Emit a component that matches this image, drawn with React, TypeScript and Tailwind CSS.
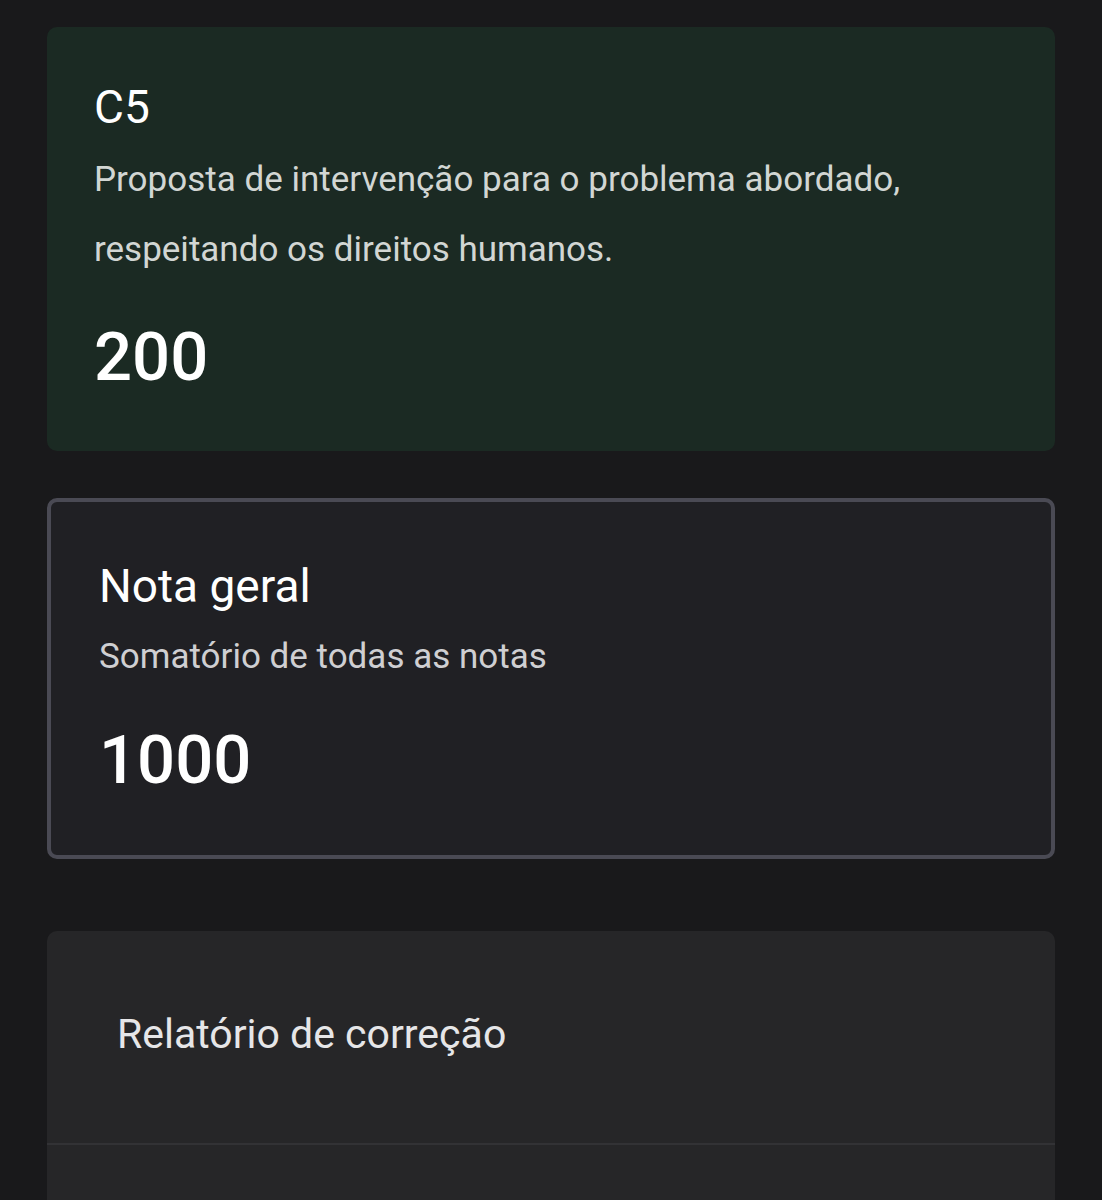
export default function App() {
  return (
    <div className="min-h-[1200px] w-full bg-[#19191b] px-[47px] pt-[27px] pb-10" style={{ fontFamily: "Roboto, 'Noto Sans', sans-serif" }}>
      <div className="rounded-[10px] bg-[#1b2a23] pl-[47px] pr-[46px] pt-[57px] pb-[60px]">
        <div className="text-[46px] leading-[46px] text-white">C5</div>
        <div className="mt-[15px] text-[35px] leading-[70px] text-[#d2d6d3]">
          Proposta de intervenção para o problema abordado,
          <br />
          respeitando os direitos humanos.
        </div>
        <div className="mt-[39px] text-[67px] leading-[67px] font-medium text-white">200</div>
      </div>

      <div className="mt-[47px] rounded-[10px] border-4 border-[#4a4a54] bg-[#202024] pl-[48px] pr-[46px] pt-[61px] pb-[61px]">
        <div className="text-[46px] leading-[46px] text-white">Nota geral</div>
        <div className="mt-[30px] text-[35px] leading-[36px] text-[#cfcfd2]">Somatório de todas as notas</div>
        <div className="mt-[52px] text-[67px] leading-[67px] font-medium text-white">1000</div>
      </div>

      <div className="mt-[72px] overflow-hidden rounded-[10px] bg-[#262628]">
        <div className="pl-[70px] pt-[82px] pb-[88px]">
          <div className="text-[41px] leading-[42px] text-[#e6e6e8]">Relatório de correção</div>
        </div>
        <div className="h-[2px] bg-[#323235]" />
        <div className="h-[200px]" />
      </div>
    </div>
  );
}
